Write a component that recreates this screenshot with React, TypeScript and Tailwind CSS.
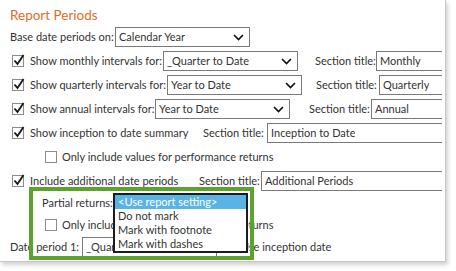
function Chevron() {
  return (
    <svg width="11" height="7" viewBox="0 0 11 7" className="shrink-0">
      <path d="M1 1l4.5 4.5L10 1" fill="none" stroke="#111" strokeWidth="1.7" />
    </svg>
  );
}

function Select({ value, w = 'w-[135px]' }: { value: string; w?: string }) {
  return (
    <div className={`${w} h-[20px] shrink-0 border border-[#7a7a7a] bg-white flex items-center justify-between pl-[3px] pr-[5px]`}>
      <span className="truncate">{value}</span>
      <Chevron />
    </div>
  );
}

function TextBox({ value }: { value: string }) {
  return (
    <div className="flex-1 h-[20px] border border-[#7a7a7a] border-r-0 bg-white flex items-center pl-[3px] min-w-0">
      <span className="truncate">{value}</span>
    </div>
  );
}

function Check({ checked = false }: { checked?: boolean }) {
  return (
    <span className="relative w-[12px] h-[12px] shrink-0 border border-[#8c8c8c] bg-white">
      {checked && (
        <svg width="14" height="14" viewBox="0 0 14 14" className="absolute -left-[1px] -top-[3px]">
          <path d="M2.5 7.5l3 3.5L11.5 2" fill="none" stroke="#1a1a1a" strokeWidth="1.9" />
        </svg>
      )}
    </span>
  );
}

const sectionRows = [
  { label: 'Show monthly intervals for:', labelW: 'w-[133px]', value: '_Quarter to Date', gap: 'ml-[17px]', titleW: 'w-[61px]', title: 'Monthly' },
  { label: 'Show quarterly intervals for:', labelW: 'w-[137px]', value: 'Year to Date', gap: 'ml-[14px]', titleW: 'w-[63px]', title: 'Quarterly' },
  { label: 'Show annual intervals for:', labelW: 'w-[125px]', value: 'Year to Date', gap: 'ml-[19px]', titleW: 'w-[62px]', title: 'Annual' },
];

export default function App() {
  return (
    <div className="w-[456px] h-[271px] bg-white font-['Lato',sans-serif] text-[11px] text-[#333] overflow-hidden">
      <div className="relative w-[446px] h-[262px] border-r border-b border-[#c6c6c6] shadow-[2px_3px_4px_rgba(0,0,0,0.18)] overflow-hidden">
        <h2 className="h-[27px] pl-[10px] pt-[7px] text-[13.5px] leading-[16px] text-[#e46c1e]">Report Periods</h2>

        <div className="flex flex-col gap-[4px] pr-[3px] whitespace-nowrap">
          <div className="h-[20px] flex items-center pl-[10px]">
            <span className="w-[105px]">Base date periods on:</span>
            <Select value="Calendar Year" />
          </div>

          {sectionRows.map((row) => (
            <div key={row.label} className="h-[20px] flex items-center pl-[12px]">
              <Check checked />
              <span className={`${row.labelW} ml-[6px]`}>{row.label}</span>
              <Select value={row.value} />
              <span className={`${row.gap} ${row.titleW}`}>Section title:</span>
              <TextBox value={row.title} />
            </div>
          ))}

          <div className="h-[20px] flex items-center pl-[12px]">
            <Check checked />
            <span className="w-[173px] ml-[6px]">Show inception to date summary</span>
            <span className="w-[64px]">Section title:</span>
            <TextBox value="Inception to Date" />
          </div>

          <div className="h-[20px] flex items-center pl-[45px]">
            <Check />
            <span className="ml-[5px]">Only include values for performance returns</span>
          </div>

          <div className="h-[20px] flex items-center pl-[12px]">
            <Check checked />
            <span className="w-[169px] ml-[6px]">Include additional date periods</span>
            <span className="w-[62px]">Section title:</span>
            <TextBox value="Additional Periods" />
          </div>

          <div className="h-[20px] mt-[-2px] flex items-center pl-[42px]">
            <span className="w-[71px]">Partial returns:</span>
            <Select value="" />
          </div>

          <div className="h-[20px] mt-[-2px] flex items-center pl-[45px]">
            <Check />
            <span className="ml-[5px]">Only include values for performance returns</span>
          </div>

          <div className="h-[20px] mt-[-2px] flex items-center pl-[10px]">
            <span className="w-[72px]">Date period 1:</span>
            <Select value="_Quarter to Date" />
            <span className="ml-[7px] flex"><Check /></span>
            <span className="ml-[5px]">Use inception date</span>
          </div>
        </div>

        {/* open dropdown list */}
        <div className="absolute left-[113px] top-[193px] w-[135px] border-2 border-[#1c1c1c] bg-white text-[11px] leading-[14px] whitespace-nowrap">
          <div className="h-[14px] pl-[3px] bg-[#59b3e6] text-white">&lt;Use report setting&gt;</div>
          <div className="h-[14px] pl-[3px]">Do not mark</div>
          <div className="h-[14px] pl-[3px]">Mark with footnote</div>
          <div className="h-[14px] pl-[3px]">Mark with dashes</div>
        </div>

        {/* highlight frame */}
        <div className="absolute left-[29px] top-[187px] w-[225px] h-[73px] border-4 border-[#5ba22e]" />
      </div>
    </div>
  );
}
